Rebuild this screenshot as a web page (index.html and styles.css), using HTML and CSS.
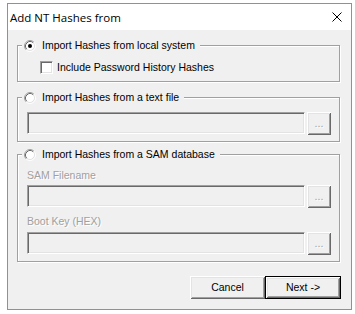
FILE: index.html
```html
<!DOCTYPE html>
<html lang="en">
<head>
    <meta charset="UTF-8">
    <meta name="viewport" content="width=device-width, initial-scale=1.0">
    <title>Add NT Hashes from</title>
    <link rel="stylesheet" href="styles.css">
</head>
<body>
    <div class="window">
        <div class="titlebar">
            <span class="title">Add NT Hashes from</span>
            <svg class="close" width="10" height="10" viewBox="0 0 10 10">
                <path d="M0.5 0.5L9.5 9.5M9.5 0.5L0.5 9.5" stroke="#000" stroke-width="1" fill="none"/>
            </svg>
        </div>
        <div class="client">
            <fieldset class="group group-local">
                <legend class="choice">
                    <svg class="radio" width="12" height="12" viewBox="0 0 12 12">
                        <circle cx="6" cy="6" r="4.5" fill="#fff"/>
                        <path d="M2.11 9.89A5.5 5.5 0 0 1 9.89 2.11" stroke="#a0a0a0" fill="none"/>
                        <path d="M9.89 2.11A5.5 5.5 0 0 1 2.11 9.89" stroke="#fff" fill="none"/>
                        <path d="M2.82 9.18A4.5 4.5 0 0 1 9.18 2.82" stroke="#696969" fill="none"/>
                        <path d="M9.18 2.82A4.5 4.5 0 0 1 2.82 9.18" stroke="#e3e3e3" fill="none"/>
                        <circle cx="6" cy="6" r="2" fill="#000"/>
                    </svg>
                    <span>Import Hashes from local system</span>
                </legend>
                <div class="group-body">
                    <label class="check"><span class="checkbox"></span>Include Password History Hashes</label>
                </div>
            </fieldset>

            <fieldset class="group group-file">
                <legend class="choice">
                    <svg class="radio" width="12" height="12" viewBox="0 0 12 12">
                        <circle cx="6" cy="6" r="4.5" fill="#fff"/>
                        <path d="M2.11 9.89A5.5 5.5 0 0 1 9.89 2.11" stroke="#a0a0a0" fill="none"/>
                        <path d="M9.89 2.11A5.5 5.5 0 0 1 2.11 9.89" stroke="#fff" fill="none"/>
                        <path d="M2.82 9.18A4.5 4.5 0 0 1 9.18 2.82" stroke="#696969" fill="none"/>
                        <path d="M9.18 2.82A4.5 4.5 0 0 1 2.82 9.18" stroke="#e3e3e3" fill="none"/>
                    </svg>
                    <span>Import Hashes from a text file</span>
                </legend>
                <div class="group-body">
                    <div class="field-row">
                        <div class="edit"></div>
                        <button class="btn browse" disabled>...</button>
                    </div>
                </div>
            </fieldset>

            <fieldset class="group group-sam">
                <legend class="choice">
                    <svg class="radio" width="12" height="12" viewBox="0 0 12 12">
                        <circle cx="6" cy="6" r="4.5" fill="#fff"/>
                        <path d="M2.11 9.89A5.5 5.5 0 0 1 9.89 2.11" stroke="#a0a0a0" fill="none"/>
                        <path d="M9.89 2.11A5.5 5.5 0 0 1 2.11 9.89" stroke="#fff" fill="none"/>
                        <path d="M2.82 9.18A4.5 4.5 0 0 1 9.18 2.82" stroke="#696969" fill="none"/>
                        <path d="M9.18 2.82A4.5 4.5 0 0 1 2.82 9.18" stroke="#e3e3e3" fill="none"/>
                    </svg>
                    <span>Import Hashes from a SAM database</span>
                </legend>
                <div class="group-body">
                    <div class="label">SAM Filename</div>
                    <div class="field-row">
                        <div class="edit"></div>
                        <button class="btn browse" disabled>...</button>
                    </div>
                    <div class="label label-second">Boot Key (HEX)</div>
                    <div class="field-row">
                        <div class="edit"></div>
                        <button class="btn browse" disabled>...</button>
                    </div>
                </div>
            </fieldset>

            <div class="actions">
                <button class="btn">Cancel</button>
                <button class="btn btn-default">Next -&gt;</button>
            </div>
        </div>
    </div>
</body>
</html>
```

FILE: styles.css
```css
body {
    margin: 0;
    background: #fff;
    font-family: 'Liberation Sans', Arial, sans-serif;
    font-size: 10.5px;
    color: #000;
}
.window {
    margin: 3px 0 0 7px;
    width: 345px;
    box-sizing: border-box;
    border: 1px solid #4da3ea;
}
.titlebar {
    height: 26px;
    background: #fff;
    display: flex;
    align-items: center;
    justify-content: space-between;
    padding-left: 2px;
}
.title {
    font-family: 'Open Sans', sans-serif;
    font-size: 11.5px;
    color: #000;
}
.close {
    margin: 0 9px 1px 0;
}
.client {
    background: #f0f0f0;
    padding: 0 10px 10px 9px;
    display: flex;
    flex-direction: column;
}
.group {
    margin: 0 1px 0 0;
    padding: 0;
    min-width: 0;
    border: 1px solid #a0a0a0;
    box-shadow: inset 1px 1px 0 #fff, 1px 1px 0 #fff;
}
.group-local {
    margin-top: 9px;
}
.group-file {
    margin-top: 9px;
}
.group-sam {
    margin-top: 6px;
}
.choice {
    margin-left: 4px;
    padding: 0 5px 0 2px;
    height: 13px;
    display: flex;
    align-items: center;
    gap: 6px;
    background: #f0f0f0;
    line-height: 13px;
}
.radio {
    display: block;
}
.group-body {
    padding: 8px 8px 6px 9px;
}
.group-local .group-body {
    padding: 9px 0 7px 22px;
}
.check {
    display: flex;
    align-items: center;
    gap: 4px;
    height: 13px;
    line-height: 13px;
}
.checkbox {
    width: 13px;
    height: 13px;
    box-sizing: border-box;
    background: #fff;
    border: 1px solid;
    border-color: #a0a0a0 #fff #fff #a0a0a0;
    box-shadow: inset 1px 1px 0 #696969, inset -1px -1px 0 #e3e3e3;
}
.field-row {
    display: flex;
    gap: 2px;
    align-items: flex-start;
}
.edit {
    flex: 1;
    height: 22px;
    box-sizing: border-box;
    background: #f0f0f0;
    border: 1px solid;
    border-color: #a0a0a0 #fff #fff #a0a0a0;
    box-shadow: inset 1px 1px 0 #696969, inset -1px -1px 0 #e3e3e3;
}
.label {
    line-height: 13px;
    color: #a0a0a0;
    text-shadow: 1px 1px 0 #fff;
    margin-bottom: 3px;
}
.label-second {
    margin-top: 7px;
    margin-bottom: 4px;
}
.btn {
    font-family: inherit;
    font-size: inherit;
    color: #000;
    background: #f0f0f0;
    border: none;
    padding: 0;
    height: 23px;
    width: 75px;
    box-sizing: border-box;
    line-height: 13px;
    box-shadow: inset 1px 1px 0 #fff, inset -1px -1px 0 #696969, inset 2px 2px 0 #e3e3e3, inset -2px -2px 0 #a0a0a0;
}
.browse {
    width: 24px;
    color: #a0a0a0;
    text-shadow: 1px 1px 0 #fff;
}
.actions {
    margin-top: 14px;
    display: flex;
    justify-content: flex-end;
}
.btn-default {
    width: 76px;
    border: 1px solid #000;
}
```
